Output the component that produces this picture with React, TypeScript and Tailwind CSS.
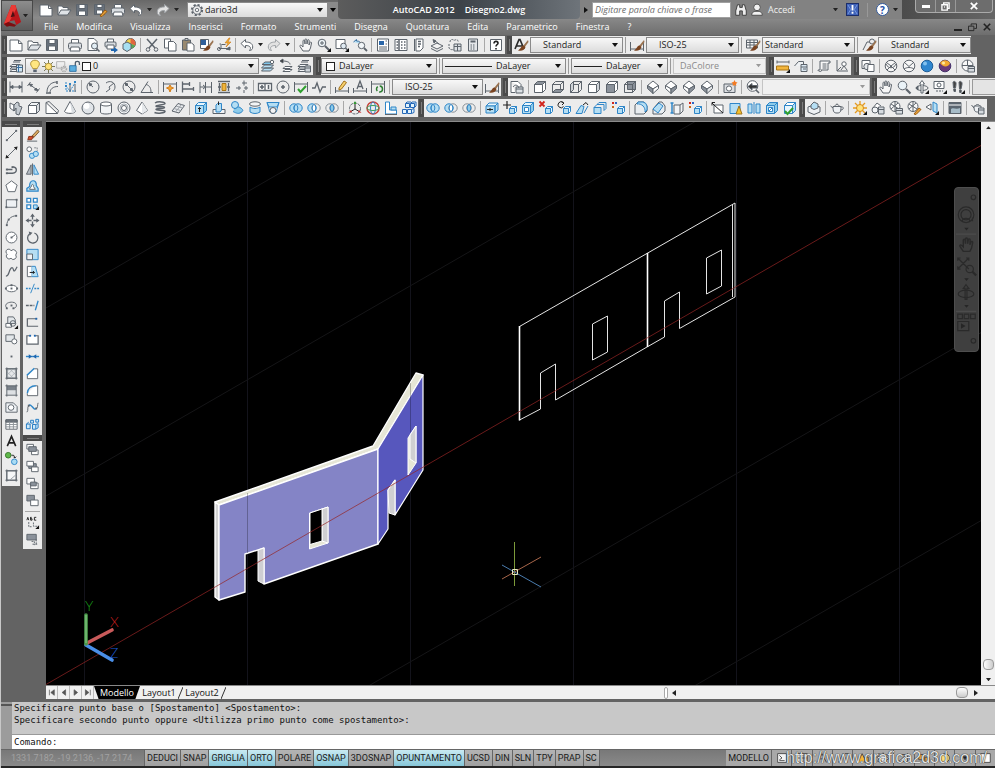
import type { ReactNode } from "react";
import clsx from "clsx";

const INK = "#5d646c";
const BLUE = "#2f86c8";
const SKY = "#b5def3";

/* ---------- shapes shared by several icons ---------- */

const page = <path d="M2 3h8.500l3.500 3.500V14H2z" fill="#fff" />;

const box = (front: string, top: string, side: string, stroke = INK) => (
  <g stroke={stroke}>
    <path d="M2.500 5.500h8v8h-8z" fill={front} />
    <path d="M2.500 5.500l3-3h8l-3 3z" fill={top} />
    <path d="M10.500 5.500l3-3v8l-3 3z" fill={side} />
  </g>
);

const smallBox = (
  <g stroke={BLUE} fill={SKY}>
    <path d="M7.500 8.500h5v5h-5z" />
    <path d="M7.500 8.500l2-2h5l-2 2zM12.500 8.500l2-2v5l-2 2z" fill="#e8f6fd" />
  </g>
);

const iso = (top: string, left: string, right: string) => (
  <g>
    <path d="M8 2L13.500 6.500L8 10L2.500 6.500z" fill={top} />
    <path d="M2.500 6.500L8 10V14.500L2.500 9.500z" fill={left} />
    <path d="M13.500 6.500L8 10V14.500L13.500 9.500z" fill={right} />
  </g>
);

const brush = (
  <g stroke="none">
    <path d="M15 3L10 9l1.500 1.500L15.500 5z" fill="#9a7350" />
    <path d="M10.500 8.500C8 8.500 8 12 5 13.500c3.500 1 7-.5 7.500-3.500z" fill="#7a4320" />
  </g>
);

const rings = (a: string, b: string, mid: string) => (
  <g stroke={BLUE}>
    <circle cx="6" cy="8" r="4.200" fill={a} stroke={a === "none" ? "#8a9299" : BLUE} />
    <circle cx="10" cy="8" r="4.200" fill={b} stroke={b === "none" ? "#8a9299" : BLUE} />
    <path d="M8 4.300c2.400 2 2.400 5.400 0 7.400c-2.400-2-2.400-5.400 0-7.400z" fill={mid} />
  </g>
);

const dots = (pts: number[][], fill = INK) =>
  pts.map(([x, y]) => <rect key={`${x}-${y}`} x={x - 1} y={y - 1} width="2" height="2" fill={fill} stroke="none" />);

const sheets = <path d="M2 11l2-2h8l-2 2zM2 8.500l2-2h8l-2 2zM2 13.500l2-2h8l-2 2z" fill="#f4f6f8" />;

const flyout = <path d="M15 11v4h-4z" fill="#111" stroke="none" />;

const handPath = "M5 14L2 9.500c-.6-1 .6-1.800 1.400-1L5 10V4c0-1.200 1.600-1.200 1.700 0L7 7V2.800c0-1.200 1.700-1.200 1.800 0L9 7l.6-3.600c.2-1.100 1.700-.9 1.600.3L11 8l1-2.500c.4-1 1.700-.5 1.500.5L12.500 11 11 14z";

/* ---------- icon set, 16 x 16 ---------- */

const icons: Record<string, ReactNode> = {
  new: <>{page}<path d="M10.500 3v3.500H14" /></>,
  open: <><path d="M2 13V4h4l1 1.500h5V8" fill="#fff" /><path d="M2 13l3-5h10l-3.500 5z" fill="#dfe3e7" /></>,
  save: <><path d="M2.500 2.500h11v11h-11z" fill="#68717c" /><path d="M5 2.500h6v4H5zM4.500 9h7v4.500h-7z" fill="#fff" /></>,
  saveas: <><path d="M2.500 2.500h10v10h-10z" fill="#68717c" /><path d="M5 2.500h5v3H5zM4.500 8h6v4h-6z" fill="#fff" /><path d="M8 14l5-6 2 1.500-5 5z" fill="#e8a33a" stroke="#9a5a10" /></>,
  print: <><path d="M4.500 6V2.500h7V6" fill="#fff" /><rect x="1.500" y="6" width="13" height="6" rx="1.500" fill="#d8dce0" /><path d="M4 10h8l1 4H3z" fill="#fff" /></>,
  preview: <><path d="M3 1.500h6l3 3v9H3z" fill="#fff" /><circle cx="9.500" cy="9" r="3" fill="#e3eef5" /><path d="M11.500 11.500l3 3" strokeWidth="1.600" /></>,
  publish: <><path d="M4.500 5V2h6v3" fill="#fff" /><rect x="2" y="5" width="11" height="5" rx="1" fill="#d8dce0" /><path d="M4 8h7v4H4z" fill="#fff" /><path d="M8 12h3v-2l4 3-4 3v-2H8z" fill="#1f66b0" stroke="none" /></>,
  dwf: <><circle cx="9.500" cy="6.500" r="5" fill="#f3d44e" /><path d="M9.500 6.500V1.500a5 5 0 0 1 4.500 7z" fill="#e2663e" stroke="none" /><path d="M9.500 6.500l4.500 2a5 5 0 0 1-5 3z" fill="#55aa55" stroke="none" /><path d="M2 7l4-2 4 2v5l-4 2.500L2 12z" fill="#a7dff2" /></>,
  cut: <><path d="M3 2l8 9M13 2L5 11" strokeWidth="1.500" /><circle cx="4" cy="12.500" r="1.800" /><circle cx="12" cy="12.500" r="1.800" /></>,
  copy: <><path d="M2.500 2h6v9h-6z" fill="#fff" /><path d="M6.500 4.500h5l2.500 2.500v7h-7.500z" fill="#fff" /></>,
  paste: <><path d="M2.500 3h8v10h-8z" fill="#9a8a70" /><path d="M5 1.500h3v2H5z" fill="#ccc" /><path d="M7 6h4.500l2.500 2v6H7z" fill="#fff" /></>,
  match: <><path d="M2.500 2.500h8v9h-8z" fill="#fff" /><path d="M3 3h5v5H3z" fill="#2f5f9a" stroke="none" />{brush}</>,
  blockedit: <><path d="M5 7H3.500M3 11.500h9M5 7.500v4M9.500 7.500h-4" /><circle cx="3" cy="12" r="1.500" /><path d="M10 12l4-2v3z" fill={INK} /><path d="M13 1l-4 5h3l-2 4 5-5h-3l2-4z" fill="#f6b02c" stroke="#c8761b" strokeWidth=".6" /></>,
  undo: <path d="M2 6.500L6.500 2.500v2.500c5 0 8 2 7 6.500-.5 1.500-2 2-3 2 2-2.500 1-5-4-5v2.500z" fill="#fff" />,
  redo: <path d="M14 6.500L9.500 2.500v2.500c-5 0-8 2-7 6.500.5 1.500 2 2 3 2-2-2.500-1-5 4-5v2.500z" fill="#e2e2e2" stroke="#a0a4a8" />,
  hand: <path d={handPath} fill="#f7f7f7" />,
  zoom: <><circle cx="6" cy="6" r="3.800" fill="#eef4f8" /><path d="M4 6h4M6 4v4" /><path d="M9 9l4.500 4.500" strokeWidth="2" />{flyout}</>,
  zoomwin: <><path d="M2 2.500h9v9H2z" fill="#fff" /><circle cx="9.500" cy="9" r="2.800" fill="#dfeaf2" /><path d="M11.500 11l2 2" strokeWidth="1.600" />{flyout}</>,
  zoomprev: <><path d="M1.500 5l3-2.500V4c3 0 4 1 4 3" fill={SKY} stroke="#3a6fa0" /><circle cx="9.500" cy="8.500" r="3.200" fill="#f2f6f8" /><path d="M12 11l3 3" strokeWidth="1.800" /></>,
  glass: <><circle cx="6.500" cy="6.500" r="4.300" fill="#eaf3f8" /><path d="M10 10l4.500 4.500" strokeWidth="2.200" /></>,
  props: <><path d="M2.500 2h11v12h-11z" fill="#fff" /><path d="M4 4h5v4H4z" fill="#2a66a8" stroke="none" /><path d="M4 10h8M4 12h8M10.500 4h1.500M10.500 7h1.500" /></>,
  center: <><path d="M2 2.500h12v11H2z" fill="#fff" /><path d="M6 2.500v11M8 5h1.500M11 5h1.500M8 8h1.500M11 8h1.500M8 11h1.500M11 11h1.500M3.500 5H5M3.500 8H5M3.500 11H5" strokeWidth="1.500" /></>,
  palette: <><path d="M5 2h7v9l-3 3H5z" fill="#fff" /><path d="M7 4.500h3M7 7h3M7 9.500h2" strokeWidth="1.500" /><path d="M3.500 2v12" /></>,
  sheetset: <><path d="M2 9l6-3 6 3-6 3z" fill="#f2f2f2" /><path d="M5 3l5 4M2 11.500l6 3 6-3" /><path d="M4 2.500l3 1.500-2 2z" fill={INK} /></>,
  markup: <><path d="M3 5c0-3 3-3 4-1.500C9 2 12 3 11 5" strokeDasharray="2 1" /><path d="M2 7v4c1 2 4 2 5 1" strokeDasharray="2 1" /><path d="M7 7h7v7H7z" fill="#dde1e5" /><path d="M7 9.500h7M10.500 7v7" /></>,
  calc: <><path d="M3.500 2h9v12h-9z" fill="#e3e6e9" /><path d="M5.500 4.500h5" strokeWidth="2" /><path d="M5.500 8h5M5.500 10h5M5.500 12h5" strokeDasharray="1.500 1" /></>,
  help: <><path d="M2.500 2.500h11v11h-11z" fill="#fff" /><path d="M6 6.500c0-3 4-2.600 4-.3 0 1.600-2 1.500-2 3.300M8 11v1.500" stroke="#222" strokeWidth="1.600" /></>,
  textstyle: <><path d="M2 12L6 2.500h1L11 12M3.500 9h6" stroke="#2b2b2b" strokeWidth="1.700" />{brush}</>,
  dimstyle: <><path d="M1.500 5v9M14.500 5v9M1.500 12h13" />{brush}</>,
  tablestyle: <><path d="M1.500 3h11v8h-11zM1.500 5.500h11M1.500 8h11M5 3v8M9 3v8" fill="#f6f6f6" />{brush}</>,
  leaderstyle: <><path d="M2 13l4-8h3" /><circle cx="11" cy="4.500" r="2.500" />{brush}</>,
  layerprops: <>{sheets}<path d="M5 4h7M6 2.500h7" /><path d="M8.500 7h6v7h-6z" fill="#cfe6f3" /><path d="M8.500 9.500h6M10.500 7v7" stroke="#3a6fa0" /></>,
  layercur: <><path d="M1.500 13l3-3h9l-3 3zM1.500 10l3-3h9l-3 3z" fill={SKY} /><path d="M2 6.500l3-2.500h8.500l-3 2.500z" fill="#7fc4e8" /><circle cx="12" cy="4" r="1.700" fill="#fff" /></>,
  layerprev: <><path d="M5 13.500l2-2h7l-2 2zM5 10.500l2-2h7l-2 2z" fill="#fff" /><path d="M12 6.500c0-3-5-3.500-7-3.500" /><path d="M2 3l3-2v4z" fill="#222" /></>,
  layerstate: <>{sheets}<path d="M9 8h5.500v6H9z" fill="#cdd3d8" /><path d="M5 4h7M6 2.500h7" /><path d="M9 10h5.500" /></>,
  measure: <><path d="M2 4h12M2 2.500v3M14 2.500v3" /><path d="M1.500 8h12v4h-12z" fill="#f2b53c" stroke="#a87514" />{flyout}</>,
  region: <><path d="M1.500 8l4-4.500h5V8" fill="#eef1f3" /><path d="M8 6.500h6v7H8z" fill="#dbe8f2" /><path d="M8 9h6M10 11h3" /></>,
  list: <><path d="M4 3h10v2h-2v7H5c2 2-3 2-3 0h2z" fill="#f6f6f6" /><path d="M6.500 6h4M6.500 8h4M6.500 10h4" /></>,
  locate: <><path d="M3 2v11h11M3 13l4-4" /><circle cx="10" cy="6" r="2.200" fill="#fff" /><path d="M10 8l3 4M10 8l-3 4" /></>,
  wire2d: <><path d="M2 2.500h8v8H2z" fill="#fff" /><circle cx="7" cy="8.500" r="3.200" fill="#e3e7ea" /><path d="M8 6.500h6v7H7.500z" fill="#fff" /></>,
  sphwire: <><circle cx="8" cy="8" r="5.800" fill="#f7f7f7" /><path d="M3.500 4.500L8 8l4.500-3.500M8 8l-4 4M8 8l4 4M3 6c2 5 8 5 10 0" /></>,
  sphhide: <><circle cx="8" cy="8" r="5.800" fill="#f7f7f7" /><path d="M3.500 4.500L8 8.500l4.500-4M3 11c3-2 7-2 10 0" /></>,
  sphblue: <><circle cx="8" cy="8" r="5.800" fill="#2f86cf" stroke="#1f5e98" /><circle cx="6" cy="5.500" r="2" fill="#83c1ee" stroke="none" /></>,
  sphgold: <><circle cx="8" cy="8" r="5.800" fill="#6a3a78" stroke="#44306a" /><path d="M3 5a6 6 0 0 1 10 0c-1 4-7 5-10 0z" fill="#f3a930" stroke="none" /><circle cx="6.500" cy="5" r="1.500" fill="#ffe9a0" stroke="none" /></>,
  sphmgr: <><circle cx="7.500" cy="7.500" r="5.500" fill="#f7f7f7" /><path d="M2 7.500h11M7.500 2v5" /><path d="M8 8.500h6.500v5.500H8z" fill="#d6dbe0" /><path d="M8 10.500h6.500" /></>,

  linear: <><path d="M2 2.500v11M14 2.500v11M2 8h12" /><path d="M2 8l3-1.500v3zM14 8l-3-1.500v3z" fill={INK} /></>,
  aligned: <><path d="M1.500 7l3-4M10.500 13.500l3-4M3 5l9 6.500" /><path d="M3 5l3.500.5-1.500 2zM12 11.500l-3.500-.5 1.500-2z" fill={INK} /></>,
  arcdim: <><path d="M3 13C3 7 7 3 13 3M6 14c0-4 3-6.500 8-6.500" /><path d="M2 14h5M13 2v3" strokeWidth="1.500" /></>,
  ordinate: <><path d="M4 3v9h10M4 7l4 5M8 12l5-8" stroke={BLUE} strokeDasharray="2 1" />{dots([[4, 7], [8, 5], [13, 3]], BLUE)}<path d="M8 6v7M13 5v8" /></>,
  radius: <><circle cx="8" cy="8" r="6" /><path d="M8 8L4.500 5" /><path d="M4 4.500l3 .6-2 2z" fill={INK} /></>,
  jogged: <><path d="M3 4c4-3 9-1 9 4 0 2-1 3-2 4M3 13l4-3-1-2 5-4" /></>,
  diameter: <><circle cx="8" cy="8" r="6" /><path d="M4 4l8 8" /><path d="M4 4l3 1-2 2zM12 12l-3-1 2-2z" fill={INK} /></>,
  angular: <><path d="M14 13.500H2L9 2.500M7 5.500c4 1 5 4 5 8" /></>,
  quick: <><path d="M1.500 3v10M14.500 3v10M1.500 5h13" /><path d="M8 6l1.200 2.200L11.500 9l-2.300 1L8 13l-1.200-3-2.300-1 2.300-.8z" fill="#f6a52c" stroke="#d27a17" /></>,
  baseline: <path d="M2.500 2.500v11M2.500 5h7M2.500 10h11M9.500 3v4M13.500 8v4" strokeWidth="1.300" />,
  continue: <path d="M2 3v11M7.500 3v11M13.500 3v11M2 8h11.500M5 6l2.500 2L5 10" />,
  space: <><path d="M2 2.500h12M2 13.500h12M3.500 4v8M12.500 4v8M2 8h3M11 8h3" strokeWidth="1.400" /><path d="M6 4.500h4v7H6z" fill="#f0b43a" stroke="#a87514" /></>,
  break: <path d="M2 9h5M10 9h4M5 7v4M10 1.500v5M10 11v3M8 4h5M12 7v4" />,
  tol: <><path d="M1.500 4.500h13v7h-13zM8 4.500v7" fill="#fff" strokeWidth="1.300" /><path d="M3 8h4M5 6v4M11.500 6v4" strokeWidth="1.600" /></>,
  centermark: <><circle cx="8" cy="8" r="6" /><path d="M8 6v4M6 8h4" strokeWidth="1.500" /></>,
  inspect: <><path d="M1.500 3v10M14.500 3v10M1.500 5h13" /><path d="M5 10l2.500 3L13 7" stroke="#2fa02f" strokeWidth="2" /></>,
  joglin: <path d="M1 9h3l2-5 3 9 2.500-5H15" strokeWidth="1.300" />,
  dimedit: <><path d="M1.500 8v6M14.500 8v6M1.500 12h13" /><path d="M5 9l5-7 2.500 1.500L7.500 10 5 11z" fill="#f5cf6a" stroke="#a0701c" /></>,
  dimtext: <><path d="M1.500 9v5M14.500 9v5M1.500 12h13" /><path d="M5 10l3-8 3 8M6 7.500h4" strokeWidth="1.300" /></>,
  dimupd: <><path d="M1.500 2v12M14.500 2v12M1.500 5h13" /><circle cx="9.500" cy="10" r="3" stroke="#2e7d32" strokeDasharray="5 2" strokeWidth="1.500" /></>,
  views: <><path d="M2 2.500h7l3 3V8M2 2.500v11h4" fill="#fff" /><path d="M7 8h7v6H7z" fill="#dde2e6" /><path d="M4 8c2-3 5-2 6 1" /><path d="M7 10h7" /></>,
  vtop: box("#fff", "#8b929b", "#fff"),
  vbottom: <>{box("none", "none", "none")}<path d="M2.500 13.500l3-3h8l-3 3z" fill="#8b929b" /></>,
  vleft: <>{box("none", "none", "none")}<path d="M2.500 5.500l3-3v8l-3 3z" fill="#cfd4d9" /></>,
  vright: box("#fff", "#fff", "#cfd4d9"),
  vfront: box("#8b929b", "#fff", "#fff"),
  vback: <><path d="M5.500 2.500h8v8h-8z" fill="#8b929b" />{box("none", "none", "none")}</>,
  isosw: iso("#fff", "#8b929b", "#fff"),
  isose: iso("#fff", "#fff", "#8b929b"),
  isone: iso("#fff", "#fff", "#8b929b"),
  isonw: iso("#fff", "#8b929b", "#e6e9ec"),
  camera: <><path d="M2 5h11v8.500H2z" fill="#dcdfe3" /><circle cx="7" cy="9.500" r="2.600" fill="#fff" /><path d="M12.500 1l1 2 2 .500-1.500 1.500.3 2-1.800-1-1.800 1 .3-2L9.500 3.500l2-.5z" fill="#f37a22" stroke="none" /></>,
  back: <><circle cx="7.500" cy="7" r="5.300" fill="#fff" /><path d="M3 7.500l4-3v2h5v2.500H7v2z" fill="#333" /><path d="M11 11l3 3" strokeWidth="1.600" /></>,
  orbit: <><ellipse cx="8" cy="9" rx="6" ry="2.500" /><path d="M8 1.500L5.500 5H7v9h2V5h1.500z" fill="#fff" /><path d="M2 9l2-2v4z" fill={INK} />{flyout}</>,
  swivel: <><path d="M2 2.500h10v7H2z" fill="#fff" /><circle cx="7" cy="6" r="2" /><path d="M4 12h7" strokeDasharray="2 1" />{flyout}</>,
  walk: <><path d="M3 3c1.500-1.500 3.500 0 3 2.500L5.500 9H3.500zM3.700 10h1.800v2.500H4zM9 3c1.500-1.500 3.500 0 3 2.500L11 10H9.500zM9.500 11h1.700v2.500H9.700z" fill="#444" />{flyout}</>,

  polysolid: <><path d="M2 3l4 2v6l-4-3z" fill="#fff" /><path d="M6 5l3-3 2 1v3l3 1-3 8-3-1V8l-2 3z" fill="#c6ccd2" /></>,
  box: box("#fff", "#f2f4f6", "#d9dde1"),
  wedge: <><path d="M2 2.500L13.500 13.500H2z" fill="#fff" /><path d="M2 2.500L5 1.500l9.500 9-1 3" /></>,
  cone: <><path d="M8 1.500L2.500 11.500c1.500 2.500 9.500 2.500 11 0z" fill="#fff" /><path d="M8 1.500l2 12 3.500-2z" fill="#d9dde1" stroke="none" /></>,
  sphere: <><circle cx="8" cy="8" r="6" fill="#e0e4e8" /><circle cx="6.500" cy="6" r="3" fill="#fff" stroke="none" /></>,
  cylinder: <><path d="M2.500 4v8.500c1 2 10 2 11 0V4z" fill="#f2f4f6" /><ellipse cx="8" cy="4" rx="5.500" ry="2" fill="#fff" /></>,
  torus: <><circle cx="8" cy="8" r="6" fill="#f2f4f6" /><circle cx="8" cy="8" r="2.500" fill="#fff" /><circle cx="8" cy="8" r="4" stroke="#aab0b6" /></>,
  pyramid: <><path d="M8 2L2.500 10.500L8 14l5.500-3.500z" fill="#fff" /><path d="M8 2l5.500 8.500L8 14z" fill="#e6e9ec" stroke="none" /></>,
  helix: <path d="M3 3c3-2 10-1 10 .5S4 5 4 6.200 12.500 6 12.500 7.500 4 8.200 4 9.500s9 0 9 1.700-7 2.800-10.500 1.300" strokeWidth="1.500" />,
  planar: <><path d="M2 11L8 3.500l6.500 2L9 13z" fill="#e6e9ec" /><path d="M4 8.500l6.500 2M6 6l6.500 2M5.500 12l6-7.500" stroke="#9aa0a6" /></>,
  extrude: <>{box(SKY, "#e8f6fd", "#8ccbea", BLUE)}<path d="M6.500 12V7.500M5 9l1.500-1.500L8 9" stroke="#222" /></>,
  press: <><path d="M2 9.500h12v4H2z" fill="#f2f4f6" /><path d="M5 12V5l1.500-1.500h4V10L9 12z" fill={SKY} stroke={BLUE} /><path d="M7.500 1.500V5" stroke="#222" /></>,
  sweep: <><circle cx="6" cy="5" r="3.500" fill={SKY} stroke={BLUE} /><path d="M5 8.500c3 1 3-3 6-1s4 3 1 5-6 0-8-1" fill="#8ccbea" stroke={BLUE} /></>,
  revolve: <><ellipse cx="8" cy="4" rx="5.500" ry="2.200" fill="#f2f4f6" /><path d="M3 7c3 2 7 2 10 0v5c-3 2-7 2-10 0z" fill={SKY} stroke={BLUE} /></>,
  loft: <><path d="M2 2.500h12L12 9c0 6-8 6-8 0z" fill="#fff" stroke={BLUE} /><path d="M2 2.500h12L12 7H4z" fill={SKY} stroke={BLUE} /><circle cx="8" cy="10.500" r="3" fill="#f2f4f6" /></>,
  union: rings(SKY, SKY, SKY),
  subtract: rings(SKY, "none", "#fff"),
  intersect: rings("none", "none", "#8ccbea"),
  move3d: <><circle cx="8" cy="8.500" r="5.500" strokeDasharray="3 1" /><path d="M8 2v7M8 9l-5 3M8 9l5 3" stroke="#222" /><path d="M8 1l1.500 3h-3z" fill="#2fa02f" stroke="none" /><path d="M1.500 13l2.500-3 1 2zM14.500 13l-2.500-3-1 2z" fill="#c33" stroke="none" /></>,
  rot3d: <><circle cx="8" cy="8" r="6" stroke="#c8423a" strokeWidth="1.500" /><ellipse cx="8" cy="8" rx="2.500" ry="6" stroke="#3a7fc8" /><ellipse cx="8" cy="8" rx="6" ry="2.500" stroke="#3aa05a" /></>,
  align3d: <><path d="M2.500 2h4v8h7v4h-11z" fill="#fff" stroke={BLUE} /><path d="M8 7h5v3H8z" fill={SKY} stroke={BLUE} /><path d="M2 14.500h12" /></>,
  array3d: <path d="M1.500 9.500h4v4h-4zM6.500 9.500h4v4h-4zM4.500 3.500h4v4h-4zM9.500 3.500h4v4h-4zM4.500 3.500l1.500-1.500h4M9.500 3.500L11 2h4v4l-1.500 1.500M10.500 9.500L13 8.500v4l-2.500 1" fill="#e2f3fc" stroke="#2468b8" />,
  fextrude: <><path d="M2 6l3-3h9l-3 3z" fill="#e8f6fd" stroke={BLUE} /><path d="M2 6h9v7H2zM11 6l3-3v7l-3 3z" fill={SKY} stroke={BLUE} /><path d="M3 9.500h6M6 8v3" stroke="#222" /></>,
  fmove: <>{smallBox}<path d="M5 1v8M1 5h8" stroke="#222" strokeWidth="1.200" /></>,
  foffset: <>{box(SKY, "#e8f6fd", "#8ccbea", BLUE)}<path d="M4.500 7.500h4v4h-4z" fill="#fff" stroke={BLUE} /></>,
  fdelete: <>{smallBox}<path d="M1.500 1.500l5 5M6.500 1.500l-5 5" stroke="#d2241c" strokeWidth="1.800" /></>,
  frotate: <>{smallBox}<path d="M7 2.500a3 3 0 1 0 .5 4M5.500 1.500L8 3 6 5" stroke="#222" /></>,
  ftaper: <><path d="M2 13.500l5-8 3 1-2 7z" fill={SKY} stroke={BLUE} /><path d="M10 13l4-7" stroke={BLUE} /><path d="M9 5l3-2.500L14 5" stroke="#222" /></>,
  fcopy: <><path d="M2 7.500h7v6H2z" fill={SKY} stroke={BLUE} /><path d="M5 4.500h7v6M5 4.500l2-2h7v6l-2 2M2 7.500l3-3" stroke={BLUE} fill="none" /></>,
  fcolor: <>{smallBox}{dots([[3, 3]], "#d2241c")}{dots([[6, 3]], "#2a66c8")}{dots([[3, 7]], "#c8641a")}</>,
  fillet3d: <><path d="M2 5l3-3h6l3 4v5l-3 3H2z" fill="#e9edf0" /><path d="M4 4a7 7 0 0 1 8 8l2-2V6a5 5 0 0 0-4-4H5z" fill={SKY} stroke={BLUE} /></>,
  chamfer3d: <><path d="M2 9l6-7h3l3 4v5l-3 3H2z" fill="#e9edf0" /><path d="M2 9l6-6 4 3-5 7z" fill={SKY} stroke={BLUE} /></>,
  ecopy: <><path d="M5 5h6l3-2v8l-3 3H5z" fill="#f2f4f6" /><path d="M3 3v10M1.500 3h3M1.500 13h3" stroke={BLUE} strokeWidth="1.500" /><path d="M11 5v9" /></>,
  imprint: <><path d="M4 5h9v8H4z" fill="#fff" /><path d="M4 5l9 8M2 3l3 3M2 2.500h3M2 2.500v3" stroke="#222" /></>,
  clean: <><path d="M2 3.500h10v10H2z" fill={SKY} stroke={BLUE} /><path d="M11 6l3 8H8z" fill="#f5c02c" stroke="#a0741c" /></>,
  separate: <><path d="M2 4h4v9H2zM10 4h4v9h-4z" fill={SKY} stroke={BLUE} /><path d="M8 2v12" stroke={BLUE} /></>,
  shell: <>{box(SKY, "#8ccbea", "#8ccbea", BLUE)}<path d="M4.500 7.500h4v4h-4z" fill="#fff" stroke={BLUE} /><path d="M5 11l3-3" stroke={BLUE} /></>,
  check: <>{box("#e8f6fd", "#fff", SKY, BLUE)}<path d="M3 11l2.500 3L11 8" stroke="#2fa02f" strokeWidth="2" /></>,
  hide: <><path d="M2 7l6-2 6 2v5l-6 2.500L2 12z" fill="#eef1f4" /><path d="M5 5l3-3 4 2v4l-4 1.500L5 8z" fill={SKY} /></>,
  teapot: <><path d="M4 6.500h8c0 6-1 6.500-4 6.500S4 12 4 6.500z" fill="#eef1f4" /><path d="M4 8L1.500 6M12 7c3-1 3 3 0 3M6 6c0-2 4-2 4 0M8 3.500v1" /></>,
  sun: <><path d="M8 1v14M1 8h14M3 3l10 10M13 3L3 13" stroke="#e69a1c" strokeWidth="1.300" /><circle cx="8" cy="8" r="3.500" fill="#ffe27a" stroke="#d88a14" />{flyout}</>,
  lights: <><path d="M2 9l5-6 4 3" fill="#fff" /><circle cx="5" cy="10" r="3" fill="#f2f4f6" /><path d="M8.500 7h5.500v7H8.500z" fill="#d6dbe0" /><path d="M8.500 9.500H14" /></>,
  materials: <><circle cx="7" cy="6.500" r="5" fill="#f7f7f7" /><path d="M3 4l8 5M3 9l7-6M7 1.500v10" /><path d="M8 8.500h6.500v5.500H8z" fill="#d6dbe0" /><path d="M8 10.500h6.500" /></>,
  matedit: <><circle cx="7" cy="6.500" r="5" fill="#f7f7f7" /><path d="M3 4l8 5M3 9l7-6M7 1.500v10" /><path d="M8 14l5-6 2 1.500-5 5z" fill="#e8a33a" stroke="#9a5a10" /></>,
  planarmap: <><path d="M9 2l4 2v9l-4-2z" fill={SKY} stroke={BLUE} /><path d="M2 7l5-3v6z" fill="#fff" />{flyout}</>,
  env: <><path d="M2 2.500h12v11H2z" fill="#5a6570" /><path d="M2 5h12" stroke="#fff" /><path d="M4 9c2-2 5 1 9-1v5H4z" fill="#a7bcc8" stroke="none" /></>,
  renderset: <><path d="M4 6h7c0 5-1 6-3.500 6S4 11 4 6zM4 8L1.500 5M5.500 6c0-2 4-2 4 0" fill="#eef1f4" /><path d="M8.500 8H14v6H8.500z" fill="#d6dbe0" /><path d="M8.500 10H14" /></>,

  line: <><path d="M3 13L13 3" />{dots([[3, 13], [13, 3]])}</>,
  xline: <><path d="M3 13L13 3" /><path d="M1.500 14.500l1-4 3 3zM14.500 1.500l-1 4-3-3z" fill="#222" stroke="none" /></>,
  pline: <><path d="M9 5.500c5-1 6 6 0 6.500H3M3 8h6" strokeWidth="1.500" />{dots([[3, 8], [3, 12], [9, 5.500]])}</>,
  polygon: <path d="M8 2l6 4.500-2.300 7H4.300L2 6.500z" fill="#fff" />,
  rect: <><path d="M2.500 4h11v8h-11z" fill="#eef1f4" />{dots([[2.500, 12], [13.500, 4]])}</>,
  arc: <><path d="M3 13C3 8 7 3 13 3" />{dots([[3, 13], [5, 7], [13, 3]])}</>,
  circle: <><circle cx="8" cy="8" r="5.800" fill="#fff" /><path d="M8 8l4-3" />{dots([[8, 8]])}</>,
  cloud: <path d="M7.500 4a2.800 2.800 0 1 0-4 3.500 2.800 2.800 0 1 0 4 4.500 2.800 2.800 0 1 0 5-3.500A2.800 2.800 0 1 0 7.500 4z" fill="#fff" />,
  spline: <path d="M2 13c3 0 3-4 4.500-7S9.500 3 10 6s2 1 4-3" strokeWidth="1.300" />,
  ellipse: <><ellipse cx="8" cy="8" rx="6" ry="3.500" fill="#fff" />{dots([[2, 8], [14, 8], [8, 8], [8, 4.500]])}</>,
  ellarc: <><path d="M3 11C-1 6 6 4 9 4.500c5 0 6 6 1 6.500" />{dots([[3, 11], [10, 11], [8, 8]])}</>,
  insert: <><path d="M4 2h6l2 3v4H4z" fill="#e3e7ea" /><path d="M2 9h6v4H2z" fill="#fff" /><circle cx="9.500" cy="9" r="3" />{flyout}</>,
  block: <><path d="M2 3h9v7H2z" fill="#e3e7ea" /><circle cx="11" cy="10" r="2.700" fill="#fff" /></>,
  point: dots([[8, 8]]),
  hatch: <><path d="M3 3h10v10H3z" fill="#e6e8ea" /><path d="M3 6l7 7M3 10l3 3M6 3l7 7M10 3l3 3M3 6l3-3M3 10l7-7M6 13l7-7" stroke="#a4aab0" strokeWidth=".7" /><path d="M1.500 3h13M1.500 13h13M3 1.500v13M13 1.500v13" /></>,
  gradient: <><path d="M3 3h10v5H3z" fill="#7b828a" stroke="none" /><path d="M3 8h10v5H3z" fill="#dde0e3" stroke="none" /><path d="M1.500 3h13M1.500 13h13M3 1.500v13M13 1.500v13" /></>,
  regiond: <><path d="M2 3h8l4 4v6H2z" fill="#eef1f4" /><circle cx="7.500" cy="8" r="3" fill="#fff" /></>,
  table: <><path d="M2 3h12v10H2z" fill="#fff" /><path d="M2 3h12v2.500H2z" fill="#70777f" /><path d="M2 8h12M2 10.500h12M6 5v8M10 5v8" stroke="#8c9298" /></>,
  mtext: <path d="M3.500 13L8 2.500 12.500 13M5 9.500h6" stroke="#222" strokeWidth="1.700" />,
  addsel: <><circle cx="4.500" cy="4.500" r="3" fill="#5fb84a" stroke="#3a7a2c" /><circle cx="11" cy="11.500" r="3" fill="#a9dcf4" stroke={BLUE} /><path d="M8 4.500c3 0 3 0 3.500 3M10 6l1.500 1.500L13 6" stroke="#222" /></>,
  wipe: <><path d="M3 3h10v10H3z" fill="#f6f7f8" /><path d="M1.500 3h13M1.500 13h13M3 1.500v13M13 1.500v13" /><path d="M6 13l7-6" stroke="#9aa0a6" /></>,

  erase: <><path d="M13.500 2L7 9l2 1.500L15 4z" fill="#d8a860" stroke="#7a5a30" /><path d="M4 9h5l-2 3.500H3z" fill="#d2502c" stroke="#8a3018" /><path d="M2 14h11" /></>,
  copyobj: <><circle cx="4.500" cy="4.500" r="2.500" fill="#fff" /><path d="M10 3h3v3" strokeDasharray="1.500 1" /><circle cx="7.500" cy="11.500" r="2.800" fill={SKY} stroke={BLUE} /><circle cx="11.500" cy="9.500" r="2.800" fill={SKY} stroke={BLUE} /></>,
  mirror: <><path d="M6.500 3v10H1.500z" fill="#b7bdc3" /><path d="M9.500 3v10h5z" fill={SKY} stroke={BLUE} /><path d="M8 1.500v13" /></>,
  offset: <><path d="M2 13v-3l3-2c-1-8 8-8 7-1l2 3v3z" fill={SKY} stroke={BLUE} strokeWidth="1.300" /><path d="M5 11c0-2 2-2 2-4s3-1 2 1l2 3z" fill="#fff" /></>,
  arrayrect: <><path d="M2 2.500h4v4H2zM9 2.500h4v4H9zM2 9.500h4v4H2z" fill="#fff" stroke={BLUE} strokeWidth="1.400" /><path d="M9 9.500h4v4H9z" fill={SKY} stroke={BLUE} />{flyout}</>,
  move: <><path d="M8 3v10M3 8h10" strokeWidth="1.400" strokeDasharray="4 2" /><path d="M8 .5l2.500 3.500h-5zM8 15.500l2.500-3.500h-5zM.5 8L4 5.500v5zM15.500 8L12 5.500v5z" fill={INK} stroke="none" /></>,
  rotate: <><path d="M5 4a5.500 5.500 0 1 0 5-.8" strokeWidth="1.400" /><path d="M4 1.500l4 1.500-3 3z" fill={INK} stroke="none" /></>,
  scale: <><path d="M2 2.500h12v11H2z" fill={SKY} stroke={BLUE} /><path d="M2 7.500h6v6H2z" fill="#eef1f4" /></>,
  stretch: <><path d="M7 2.500h4l3 11H7z" fill={SKY} stroke={BLUE} /><path d="M7 2.500H2.500v11H7" fill="#fff" /><path d="M5 9h5M8.500 7.500L10 9l-1.500 1.500" stroke="#111" /></>,
  trim: <><path d="M1 8h5M10 8h5" stroke={BLUE} strokeWidth="1.400" strokeDasharray="2 1" /><path d="M6 13l4-10" stroke={BLUE} /></>,
  extend: <><path d="M1 8h9" strokeDasharray="3 1" strokeWidth="1.400" /><path d="M11 13l3-10" stroke={BLUE} strokeWidth="1.400" /></>,
  breakpt: <><path d="M13 4H2.500v8H14" strokeWidth="1.300" />{dots([[12, 4]], "#1f66b0")}</>,
  breakobj: <><path d="M5 4H2v9h12V4h-3" fill="#fff" strokeWidth="1.300" />{dots([[5.500, 4], [10.500, 4]], "#1f66b0")}</>,
  join: <><path d="M1 8h14" stroke={BLUE} strokeWidth="1.500" /><path d="M4 5.500L7.500 8 4 10.500zM12 5.500L8.500 8l3.500 2.500z" fill="#1f66b0" stroke="none" /></>,
  chamfer: <><path d="M2.500 10v3.500h11V3H10" fill="#fff" /><path d="M2 10l8-7.500" stroke={BLUE} strokeWidth="1.500" /></>,
  fillet: <><path d="M2.500 11v2.500h11V3H11" fill="#fff" /><path d="M2.500 11c0-5 4-8 9-8" stroke={BLUE} strokeWidth="1.500" /></>,
  blend: <><path d="M2 13c2-2 0-5 2-7M12 9c2 0 1-4 2-6" /><path d="M4 6c3-3 5 6 8 3" stroke={BLUE} strokeWidth="1.500" />{dots([[4, 6], [12, 9]])}</>,
  explode: <path d="M1.500 7.500h4v5h-4zM8 8h3.500v5H8zM6 3.500h3v3H6zM11.500 2.500h3v3h-3zM11.500 8L14 7v4.500L11.500 13M1.500 7.500L4 5.500" fill="#cfeafa" stroke="#1f78c0" />,
  front: <><path d="M2 2.500h7v5H2zM7 8.500h7v5H7z" fill="#fff" /><path d="M4 5h8v5H4z" fill="#8b929b" /></>,
  backo: <><path d="M4 5h8v5H4z" fill="#8b929b" /><path d="M2 2.500h7v5H2zM7 8.500h7v5H7z" fill="#fff" /></>,
  above: <><path d="M6 7.500h8v6H6z" fill="#fff" /><path d="M2 2.500h8v6H2z" fill="#fff" /><path d="M6 6.500h6v4H6z" fill="#8b929b" /></>,
  under: <><path d="M2 2.500h8v6H2z" fill="#8b929b" /><path d="M6 7.500h8v6H6z" fill="#fff" /></>,
  abc: <><path d="M2 5.500L3 2.500l1 3M6 2.500v3h1.500v-1.500H6V2.500h1M12 2.500h-2v3h2" stroke="#222" /><path d="M4 7.500v5h3M9 8v4h4" strokeDasharray="2 1" />{flyout}</>,
  hatchback: <><path d="M2 2.500h10v6H2z" fill="#8b929b" /><path d="M7 10h3v4M12 8v6M8 13h6" strokeDasharray="2 1" /></>,
};

type IconProps = { name: string; className?: string };

function Icon({ name, className = "size-4" }: IconProps) {
  return (
    <svg viewBox="0 0 16 16" className={clsx("shrink-0", className)} fill="none" stroke={INK} strokeWidth="1" aria-hidden="true">
      {icons[name]}
    </svg>
  );
}

/* "|" is a separator, "v" a narrow history arrow */
const standardBar = "new open save | print preview publish dwf | cut copy paste match blockedit | undo v redo v | hand zoom zoomwin zoomprev | props center palette sheetset markup calc | help";
const dimBar = "linear aligned arcdim ordinate | radius jogged diameter angular | quick baseline continue space break | tol centermark inspect joglin | dimedit dimtext dimupd |";
const viewBar = "views | vtop vbottom vleft vright vfront vback | isosw isose isone isonw | camera | back";
const modelBar = "polysolid box wedge cone sphere cylinder torus pyramid helix planar | extrude press sweep revolve loft | union subtract intersect | move3d rot3d align3d array3d";
const solidBar = "union subtract intersect | fextrude fmove foffset fdelete frotate ftaper fcopy fcolor | fillet3d chamfer3d ecopy fcolor | imprint clean separate shell check";
const renderBar = "hide | teapot | sun lights materials matedit planarmap | env | renderset";
const drawBar = "line xline pline polygon rect arc circle cloud spline ellipse ellarc insert block point hatch gradient regiond table mtext addsel wipe";
const modifyBar = "erase copyobj mirror offset arrayrect move rotate scale stretch trim extend breakpt breakobj join chamfer fillet blend explode";
const orderBar = "front backo above under | abc hatchback";

const menus = ["File", "Modifica", "Visualizza", "Inserisci", "Formato", "Strumenti", "Disegna", "Quotatura", "Edita", "Parametrico", "Finestra", "?"];

const modes = [
  { label: "DEDUCI", on: false },
  { label: "SNAP", on: false },
  { label: "GRIGLIA", on: true },
  { label: "ORTO", on: true },
  { label: "POLARE", on: false },
  { label: "OSNAP", on: true },
  { label: "3DOSNAP", on: false },
  { label: "OPUNTAMENTO", on: true },
  { label: "UCSD", on: false },
  { label: "DIN", on: false },
  { label: "SLN", on: false },
  { label: "TPY", on: false },
  { label: "PRAP", on: false },
  { label: "SC", on: false },
];

function Tools({ items, vertical = false }: { items: string; vertical?: boolean }) {
  return (
    <>
      {items.split(" ").map((name, i) => {
        if (name === "|") {
          return <span key={i} className={vertical ? "mx-0.5 my-0.5 h-px bg-[#a8a8a8]" : "mx-0.5 h-3.5 w-px shrink-0 bg-[#a8a8a8]"} />;
        }
        if (name === "v") {
          return (
            <button key={i} aria-label="cronologia" className="flex w-[9px] shrink-0 items-center justify-center">
              <Arrow />
            </button>
          );
        }
        return (
          <button key={i} aria-label={name} className={clsx("flex shrink-0 items-center justify-center", vertical ? "h-[17px] w-full" : "h-[18px] w-[18px]")}>
            <Icon name={name} className={vertical ? "size-[15px]" : "size-4"} />
          </button>
        );
      })}
    </>
  );
}

function Arrow({ className = "w-[5px] text-[#222]" }: { className?: string }) {
  return (
    <svg viewBox="0 0 6 4" className={clsx("shrink-0", className)} aria-hidden="true">
      <path d="M0 0h6L3 4z" fill="currentColor" />
    </svg>
  );
}

function Panel({ children }: { children: ReactNode }) {
  return (
    <div className="flex h-[18px] shrink-0 items-center">
      <span className="flex h-full w-[5px] items-center justify-center bg-[#4a4a4a]">
        <span className="h-3 w-px bg-[#7d7d7d]" />
      </span>
      <div className="flex h-full items-center bg-[#ececec]">{children}</div>
    </div>
  );
}

type ComboProps = { label: string; value: string; className: string; lead?: ReactNode; disabled?: boolean; indent?: string };

function Combo({ label, value, className, lead, disabled = false, indent = "pl-3" }: ComboProps) {
  return (
    <div className={clsx("flex h-4 shrink-0 items-center border pr-1", disabled ? "border-[#c4c4c4] bg-[#f0f0f0]" : "border-[#8a8a8a] bg-gradient-to-b from-[#f8f8f8] to-[#dcdcdc]", className)}>
      {lead}
      <select aria-label={label} disabled={disabled} className={clsx("h-full min-w-0 flex-1 appearance-none bg-transparent outline-none", indent, disabled ? "text-[#8a8a8a]" : "text-[#1c1c1c]")}>
        <option>{value}</option>
      </select>
      <Arrow className={disabled ? "w-[5px] text-[#999]" : "w-[6px] text-[#111]"} />
    </div>
  );
}

function Header() {
  return (
    <header className="flex h-[35px] shrink-0 bg-gradient-to-b from-[#686868] via-[#8a8a8a] to-[#6e6e6e]">
      <button aria-label="Menu applicazione" className="mb-1 flex w-8 shrink-0 items-center border border-[#484848] bg-gradient-to-b from-[#8d8d8d] to-[#5c5c5c]">
        <svg viewBox="0 0 22 26" className="w-[21px]" aria-hidden="true">
          <path d="M2 22L10 2h4l6 18-5 3-2-5-5 1-2 4z" fill="#b9161b" />
          <path d="M10 2h4l1 4-7 13-6 3z" fill="#ea3a35" />
          <path d="M11.500 8l2 6-4.500 1z" fill="#4d1012" />
          <path d="M2 22l5-2 8 3-2 2-5-1-3 1z" fill="#7d0d10" />
        </svg>
        <Arrow className="w-[5px] text-[#222]" />
      </button>
      <div className="flex min-w-0 flex-1 flex-col">
        <div className="flex h-[19px] items-center">
          <div className="flex w-[154px] shrink-0 items-center pl-1">
            <Tools items="new open save saveas print undo v redo v" />
          </div>
          <Combo
            label="Area di lavoro"
            value="dario3d"
            className="w-[141px]"
            indent="pl-px"
            lead={
              <svg viewBox="0 0 16 16" className="ml-0.5 size-3.5" fill="none" stroke={INK} aria-hidden="true">
                <circle cx="8" cy="8" r="5.500" strokeWidth="3" strokeDasharray="2.300 2" />
                <circle cx="8" cy="8" r="4.800" fill="#f2f2f2" />
                <circle cx="8" cy="8" r="2" />
              </svg>
            }
          />
          <button aria-label="Personalizza" className="flex h-4 w-[10px] shrink-0 items-center justify-center bg-[#8a8a8a]">
            <Arrow className="w-[6px] text-black" />
          </button>
          <h1 className="flex h-full min-w-0 flex-1 items-center justify-center gap-2.5 whitespace-nowrap rounded-b bg-gradient-to-r from-[#5c5c5c] via-[#3c4248] to-[#6e747a] font-semibold text-white">
            <span>AutoCAD 2012</span>
            <span>Disegno2.dwg</span>
          </h1>
          <div className="flex h-full w-[322px] shrink-0 items-center bg-[#828282]">
            <button aria-label="Comprimi" className="flex w-3 justify-center">
              <svg viewBox="0 0 4 6" className="h-[6px]" aria-hidden="true"><path d="M0 0v6l4-3z" fill="#111" /></svg>
            </button>
            <input aria-label="Cerca" placeholder="Digitare parola chiave o frase" className="h-4 w-[139px] border border-[#a0a0a0] bg-white pl-0.5 italic outline-none placeholder:text-[#6c6c6c]" />
            <button aria-label="Trova" className="flex w-[19px] justify-center">
              <svg viewBox="0 0 16 16" className="size-3.5" fill="#eee" stroke="#333" aria-hidden="true">
                <path d="M4 2h2.500v3H9.500V2H12l2 7v5H9.500V9h-3v5H2V9z" />
              </svg>
            </button>
            <button className="flex items-center gap-1 text-[#f0f0f0]">
              <svg viewBox="0 0 16 16" className="size-3.5" fill="#f2f2f2" stroke="#444" aria-hidden="true">
                <circle cx="8" cy="5" r="3.800" />
                <path d="M2 14c0-4 3-4.500 6-4.500s6 .5 6 4.500z" />
              </svg>
              Accedi
            </button>
            <span className="ml-auto"><Arrow /></span>
            <button aria-label="Exchange" className="ml-2 flex size-[13px] items-center justify-center border border-[#1b2d6a] bg-[#3f62b8]">
              <svg viewBox="0 0 12 12" className="size-[11px]" aria-hidden="true">
                <path d="M1 1l3 5-3 5M11 1L8 6l3 5" stroke="#7f9fe0" fill="none" />
                <path d="M5 1h2v6H5zM5 8.500h2v2H5z" fill="#fff" />
              </svg>
            </button>
            <span className="mx-2 h-3.5 w-px bg-[#999]" />
            <button aria-label="Guida" className="flex size-[13px] items-center justify-center rounded-full border border-[#345a9a] bg-white text-[10px] font-bold leading-none text-[#1c4fa8]">?</button>
            <span className="mx-1"><Arrow /></span>
          </div>
          <div className="flex h-full w-[93px] shrink-0 items-start justify-end bg-gradient-to-r from-[#4c4c4c] to-[#666] pr-0.5">
            <div className="flex h-[13px] rounded-b border border-t-0 border-[#aaa] bg-[#6d6d6d]">
              <button aria-label="Riduci" className="flex w-5 items-center justify-center border-r border-[#999]"><span className="h-[3px] w-2 bg-white" /></button>
              <button aria-label="Ripristina" className="flex w-5 items-center justify-center border-r border-[#999]">
                <svg viewBox="0 0 10 10" className="size-[9px]" fill="none" stroke="#fff" strokeWidth="1.500" aria-hidden="true"><path d="M3 3V1h6v6H7M1 3h6v6H1zM3.500 5.500h1" /></svg>
              </button>
              <button aria-label="Chiudi" className="flex w-9 items-center justify-center">
                <svg viewBox="0 0 10 10" className="size-[8px]" stroke="#fff" strokeWidth="2.200" aria-hidden="true"><path d="M1 1l8 8M9 1L1 9" /></svg>
              </button>
            </div>
          </div>
        </div>
        <nav className="flex h-4 items-center gap-[18px] pl-[11px] text-white">
          {menus.map((m) => (
            <a key={m} href="#">{m}</a>
          ))}
          <div className="ml-auto flex items-center gap-1.5 pr-1">
            <button aria-label="Riduci disegno" className="flex h-2 w-2 items-end"><span className="h-0.5 w-full bg-[#222]" /></button>
            <button aria-label="Ripristina disegno">
              <svg viewBox="0 0 10 10" className="size-[9px]" fill="none" stroke="#222" aria-hidden="true"><path d="M3.500 3V1h6v5H7M.5 3.500h6v5h-6z" /></svg>
            </button>
            <button aria-label="Chiudi disegno">
              <svg viewBox="0 0 10 10" className="size-[8px]" stroke="#222" strokeWidth="2" aria-hidden="true"><path d="M1 1l8 8M9 1L1 9" /></svg>
            </button>
          </div>
        </nav>
      </div>
    </header>
  );
}

const swatch = <span className="ml-1 size-[9px] shrink-0 border border-[#222] bg-white" />;

function LayerLead() {
  return (
    <span className="flex shrink-0 items-center pl-0.5">
      <svg viewBox="0 0 16 16" className="size-3.5" aria-hidden="true">
        <path d="M5.500 11C5 9 3 8 3 5.500 3 0 13 0 13 5.500 13 8 11 9 10.500 11z" fill="#ffe680" stroke="#a8872a" />
        <path d="M6 12h4v3H6z" fill="#5a6472" />
      </svg>
      <svg viewBox="0 0 16 16" className="size-[13px]" aria-hidden="true">
        <path d="M8 0v16M0 8h16M2.500 2.500l11 11M13.500 2.500l-11 11" stroke="#5e5e3a" />
        <circle cx="8" cy="8" r="4" fill="#ffe27a" stroke="#9a8020" />
      </svg>
      <svg viewBox="0 0 16 16" className="size-[13px]" fill="none" stroke="#a8a8a8" aria-hidden="true">
        <path d="M2 2h10v8H2z" />
        <circle cx="11" cy="11" r="3" strokeDasharray="1.500 1" strokeWidth="2" />
      </svg>
      <svg viewBox="0 0 16 16" className="size-[13px]" fill="none" aria-hidden="true">
        <path d="M9 8V4c0-3 5-3 5 0v2" stroke="#4a5a6a" strokeWidth="1.500" />
        <path d="M2 7h8v7H2z" fill="#5aaee0" stroke="#24679c" />
      </svg>
      <span className="ml-px size-[9px] border border-[#222] bg-white" />
    </span>
  );
}

function Toolbars() {
  const bar = <span className="mx-0.5 h-4 w-px shrink-0 bg-[#9a9a9a]" />;
  return (
    <div className="flex shrink-0 flex-col gap-[3px] overflow-hidden pb-1 pl-px pt-px">
      <div className="flex gap-0.5">
        <Panel><Tools items={standardBar} /></Panel>
        <Panel>
          <Tools items="textstyle" />
          <Combo label="Stile testo" value="Standard" className="w-[93px]" />
          {bar}
          <Tools items="dimstyle" />
          <Combo label="Stile quota" value="ISO-25" className="w-[93px]" />
          {bar}
          <Tools items="tablestyle" />
          <Combo label="Stile tabella" value="Standard" className="w-[93px]" indent="pl-0.5" />
          {bar}
          <Tools items="leaderstyle" />
          <Combo label="Stile direttrice" value="Standard" className="w-[93px]" />
        </Panel>
      </div>
      <div className="flex gap-[3px]">
        <Panel>
          <Tools items="layerprops" />
          <Combo label="Layer" value="0" className="w-[234px]" indent="pl-0.5" lead={<LayerLead />} />
          <Tools items="layercur layerprev layerstate" />
        </Panel>
        <Panel>
          <Combo label="Colore" value="DaLayer" className="w-[116px]" indent="pl-1" lead={swatch} />
          {bar}
          <Combo label="Tipo di linea" value="DaLayer" className="w-[124px]" indent="pl-1" lead={<span className="ml-0.5 h-px w-[47px] bg-[#222]" />} />
          {bar}
          <Combo label="Spessore di linea" value="DaLayer" className="w-[97px]" indent="pl-1" lead={<span className="ml-0.5 h-px w-7 bg-[#222]" />} />
          {bar}
          <Combo label="Stile di stampa" value="DaColore" className="w-[93px]" indent="pl-1.5" disabled />
        </Panel>
        <Panel><Tools items="measure region | list locate" /></Panel>
        <Panel><Tools items="wire2d | sphwire sphhide sphblue sphgold | sphmgr" /></Panel>
      </div>
      <div className="flex gap-0.5">
        <Panel>
          <Tools items={dimBar} />
          <Combo label="Stile di quota corrente" value="ISO-25" className="w-[91px]" />
          <Tools items="dimstyle" />
        </Panel>
        <Panel>
          <Tools items={viewBar} />
          <Combo label="Vista" value="" className="w-[108px]" disabled />
        </Panel>
        <Panel>
          <Tools items="hand glass orbit swivel walk |" />
          <div className="h-4 w-8 border border-[#9a9a9a] bg-[#e4e4e4]" />
        </Panel>
      </div>
      <div className="flex gap-px">
        <Panel><Tools items={modelBar} /></Panel>
        <Panel><Tools items={solidBar} /></Panel>
        <Panel><Tools items={renderBar} /></Panel>
      </div>
    </div>
  );
}

function SideBars() {
  const grip = (
    <span className="flex h-1.5 items-center justify-center bg-[#4a4a4a]">
      <span className="h-px w-3 bg-[#7d7d7d]" />
    </span>
  );
  return (
    <aside className="flex w-[45px] shrink-0 items-start gap-[3px] overflow-hidden pl-px">
      <div className="flex w-[18px] flex-col bg-[#ececec] pb-0.5">
        {grip}
        <Tools items={drawBar} vertical />
      </div>
      <div className="flex w-[19px] flex-col">
        <div className="flex flex-col bg-[#ececec] pb-0.5">
          {grip}
          <Tools items={modifyBar} vertical />
        </div>
        <div className="flex flex-col bg-[#ececec] pb-px">
          {grip}
          <Tools items={orderBar} vertical />
        </div>
      </div>
    </aside>
  );
}

function Drawing() {
  return (
    <svg className="absolute inset-0 size-full" role="img" aria-label="Vista del modello 3D">
      <g transform="translate(-46 -122)">
        <g stroke="#13131b" strokeWidth="1">
          {[84.5, 247.5, 410.5, 573.5, 736.5, 899.5].map((x) => (
            <path key={x} d={`M${x} 100V900`} />
          ))}
          {[120, 308, 496, 872, 1060, 1248].map((y) => (
            <path key={y} d={`M46 ${y}l1600 -923`} stroke="#151517" />
          ))}
        </g>

        {/* solid walls */}
        <g stroke="#fff" strokeLinejoin="round">
          <path d="M215 502L373 446L416 373L423 375L378 449L219 505z" fill="#e6e6d6" strokeWidth="1.400" />
          <path d="M215 502L219 505V600L215 597z" fill="#d4d4d4" strokeWidth="1.400" />
          <path d="M219 505L378 449V544L264 584V548L245 554V592L219 600z" fill="#8484c6" strokeWidth="1.400" />
          <path d="M258 550L264 548V584L258 581z" fill="#cfcfd2" />
          <path d="M378 449L423 375V470L395 515V480L388 490V529L378 544z" fill="#5757bd" strokeWidth="1.200" />
          <path d="M388 490L395 480V515L389 513z" fill="#cfcfd2" />
          <path d="M309.500 513L328 507V543L309.500 549z" fill="#e6e6d6" />
          <path d="M322 509L328 507V543L322 541z" fill="#cfcfd2" />
          <path d="M310 513L322 509V541L310 544.500z" fill="#000" />
          <path d="M408 438L416 426V463L408 475z" fill="#e6e6d6" />
          <path d="M410 435L416 426V463L410 459z" fill="#cfcfd2" />
        </g>
        <path d="M247.500 493V553M410.500 383V432" stroke="#000" opacity=".25" />

        {/* flat outline of the same walls */}
        <g stroke="#e4e4e4" fill="none">
          <path d="M519.500 326.500L735 203V297L679.500 328.500V292L664.500 301V337L647 347L555.500 400V364L540.500 373V409L519.500 420z" />
          <path d="M592.500 324L607.500 316V352L592.500 360zM706.500 258L721.500 250V286L706.500 294z" />
          <path d="M732.500 204V297" />
          <path d="M519.500 326V420.500M647.500 253V347" stroke="#fff" strokeWidth="1.600" />
        </g>

        <path d="M46 684.500L981 145.500" stroke="#962626" opacity=".7" />

        {/* crosshair */}
        <path d="M514.500 542V586" stroke="#7c9a3a" />
        <path d="M502 579L541 557" stroke="#a8664a" />
        <path d="M502 565L541 587" stroke="#4a7cae" />
        <path d="M512.500 569.500h5v5h-5z" stroke="#e8e8c0" fill="none" />

        {/* UCS icon */}
        <g strokeWidth="3.600" strokeLinecap="round">
          <path d="M86 645L112 660" stroke="#4a8fe8" />
          <path d="M87 643L112 630" stroke="#c85a5a" />
          <path d="M86 644V615" stroke="#4a9a4a" />
        </g>
        <path d="M86 643V615" stroke="#8fce8f" />
        <g fontFamily="Lato, sans-serif" fontSize="14" fontWeight="300">
          <text x="85" y="611" fill="#1a9a1a">Y</text>
          <text x="110" y="627" fill="#c81e1e">X</text>
          <text x="110" y="658" fill="#1e5ad2">Z</text>
        </g>
      </g>
    </svg>
  );
}

function NavBar() {
  return (
    <div className="absolute right-0.5 top-[65px] h-[165px] w-[25px] rounded border border-[#4e4e4e] bg-[#3f3f3f]">
      <svg viewBox="0 0 25 165" className="size-full" fill="none" stroke="#2a2a2a" strokeWidth="1.300" aria-label="Barra di navigazione">
        <circle cx="20" cy="4" r="2.500" />
        <circle cx="12" cy="23" r="8.500" />
        <circle cx="12" cy="23" r="5.500" />
        <path d="M8 30c0-4 8-4 8 0M19 30v-4" />
        <path d="M1 44h22M1 128h22" stroke="#4c4c4c" />
        <path d={handPath} transform="translate(3 46) scale(1.200)" />
        <path d="M3 70l12 12M15 70L3 82M3 73v-3h3M12 70h3v3M3 79v3h3" />
        <circle cx="16" cy="82" r="4" />
        <path d="M19 85l4 4" strokeWidth="2.500" />
        <path d="M12 99l-3 4h2v12h2v-12h2z" />
        <ellipse cx="12" cy="109" rx="8.500" ry="4" />
        <path d="M3 131h5v5H3zM10 131h5v5h-5zM17 131h5v5h-5zM3 139h12v10H3z" />
        <path d="M6.500 141v6l5-3zM10 37h5l-2.500 3zM10 92h5l-2.500 3zM10 121h5l-2.500 3z" fill="#262626" stroke="none" />
        <circle cx="20" cy="160" r="2.500" />
      </svg>
    </div>
  );
}

function LayoutTabs() {
  const arrows = ["M2 1v8M9 1L4 5l5 4z", "M8 1L3 5l5 4z", "M3 1l5 4-5 4z", "M9 1v8M2 1l5 4-5 4z"];
  return (
    <div className="flex h-3.5 shrink-0 items-center border-t border-[#888] bg-[#f0f0f0]">
      {arrows.map((d) => (
        <button key={d} aria-label="Scorri schede" className="flex h-full w-3 items-center justify-center border-r border-[#bbb]">
          <svg viewBox="0 0 11 10" className="h-[7px]" fill="#555" stroke="#555" aria-hidden="true"><path d={d} /></svg>
        </button>
      ))}
      <button className="h-full w-[46px] bg-black text-white [clip-path:polygon(0_0,100%_0,90%_100%,10%_100%)]">Modello</button>
      <button className="h-full w-[38px] text-[#111]">Layout1</button>
      <Slash />
      <button className="h-full w-[38px] text-[#111]">Layout2</button>
      <Slash />
      <div className="ml-auto flex h-full w-[331px] items-center">
        <span className="h-3 w-1 rounded-sm border border-[#a8a8a8] bg-white" />
        <svg viewBox="0 0 4 6" className="ml-1 h-[6px]" aria-hidden="true"><path d="M4 0v6L0 3z" fill="#222" /></svg>
        <span className="ml-auto h-[11px] w-3 rounded-sm border border-[#999] bg-gradient-to-b from-white to-[#ccc]" />
        <svg viewBox="0 0 4 6" className="ml-1.5 mr-[17px] h-[6px]" aria-hidden="true"><path d="M0 0v6l4-3z" fill="#222" /></svg>
      </div>
    </div>
  );
}

function Slash() {
  return (
    <svg viewBox="0 0 5 12" className="h-3 w-[5px]" stroke="#333" aria-hidden="true"><path d="M0 12L5 0" /></svg>
  );
}

function StatusBar() {
  const tray = [
    <path key="a" d="M3 3h10v10H3zM5 11h6M5 5l3 3-3 2" fill="#f4f4f4" />,
    <path key="b" d="M2 3h12v10H2zM2 8h12M6 3v10M10 3v10" fill="#f4f4f4" />,
    <path key="c" d="M3 13L8 3l5 10M5 9h6" />,
    <path key="d" d="M3 13L8 3l5 10M10 3h4v3" />,
    <path key="e" d="M2 13L7 3l4 8M10 7h4v6h-4z" fill="#f6b63a" />,
    <path key="f" d="M8 2l2 3 3-1-1 3 3 2-3 1v3l-3-1-2 2-1-3-4 1 1-3-2-2 3-1-1-3 3 1z" fill="#eee" />,
    <path key="g" d="M2 12L12 3v9zM4 4h5" fill="#eee" />,
    <path key="h" d="M2 4h6v6H2zM9 7h5v6H9z" fill="#e8a33a" />,
    <circle key="i" cx="8" cy="8" r="5" fill="#ffe27a" />,
    <path key="j" d="M5 6h6l-3 4z" fill="#222" />,
    <path key="k" d="M3 3h11v10H3z" fill="#fff" />,
  ];
  return (
    <footer className="relative flex h-[17px] shrink-0 items-center border-t border-[#666] bg-gradient-to-b from-[#787878] to-[#8a8a8a] font-[Roboto,sans-serif] text-[9px]">
      <span className="w-[143px] shrink-0 pl-2.5 text-[#a2a2a2]">1331.7182, -19.2136, -17.2174</span>
      {modes.map((m) => (
        <button
          key={m.label}
          aria-pressed={m.on}
          className={clsx("h-full shrink-0 border-l border-[#666] px-0.5 text-[#1a1a1a]", m.on ? "bg-gradient-to-b from-[#c8eaf2] to-[#86c6d8]" : "bg-gradient-to-b from-[#b4b4b4] to-[#a0a0a0]")}
        >
          {m.label}
        </button>
      ))}
      <span className="h-full w-px bg-[#666]" />
      <div className="ml-auto flex h-full w-[269px] shrink-0 items-center bg-[#a8a8a8]">
        <button className="h-full w-[45px] text-[#1a1a1a]">MODELLO</button>
        {tray.map((shape, i) => (
          <button key={i} aria-label={`Stato ${i + 1}`} className="flex h-full flex-1 items-center justify-center border-l border-[#666]">
            <svg viewBox="0 0 16 16" className="size-3.5" fill="none" stroke="#444" aria-hidden="true">{shape}</svg>
          </button>
        ))}
      </div>
      <a href="#" className="absolute right-2 top-0 font-['Liberation_Sans',sans-serif] text-base leading-4 text-[#e2e2e2] [text-shadow:0_0_1px_#222,0_0_1px_#444]">
        http://www.grafica2d3d.com/
      </a>
    </footer>
  );
}

export default function App() {
  return (
    <div className="flex h-screen flex-col overflow-hidden border-l border-[#c8c8c8] bg-[#636363] font-['Open_Sans','Noto_Sans',sans-serif] text-[9px] leading-3">
      <Header />
      <Toolbars />
      <div className="flex min-h-0 flex-1">
        <SideBars />
        <main className="flex min-w-0 flex-1 flex-col">
          <div className="flex min-h-0 flex-1 border-t border-[#8a8a8a]">
            <div className="relative min-w-0 flex-1 overflow-hidden bg-black">
              <Drawing />
              <NavBar />
            </div>
            <div className="flex w-3.5 shrink-0 flex-col items-center bg-[#f0f0f0] py-1">
              <Arrow className="w-[5px] rotate-180 text-[#222]" />
              <span className="mb-2 mt-auto size-[11px] rounded-sm border border-[#999] bg-gradient-to-r from-white to-[#ccc]" />
              <Arrow className="w-[5px] text-[#222]" />
            </div>
          </div>
          <LayoutTabs />
        </main>
      </div>
      <section className="mt-[3px] flex shrink-0 font-['DejaVu_Sans_Mono',monospace] text-[#111]">
        <div className="w-[11px] shrink-0 bg-[#9c9c9c] pt-0.5">
          <span className="block h-0.5 bg-[#555]" />
        </div>
        <div className="min-w-0 flex-1">
          <div className="h-[33px] overflow-hidden border-b border-[#999] bg-[#c8c8c8] pl-0.5">
            <p>Specificare punto base o [Spostamento] &lt;Spostamento&gt;:</p>
            <p>Specificare secondo punto oppure &lt;Utilizza primo punto come spostamento&gt;:</p>
          </div>
          <label className="flex h-3.5 items-center bg-white pl-0.5">
            Comando:
            <input className="h-full flex-1 pl-1 outline-none" />
          </label>
        </div>
      </section>
      <StatusBar />
      <div className="h-0.5 shrink-0 bg-[#262626]" />
    </div>
  );
}
